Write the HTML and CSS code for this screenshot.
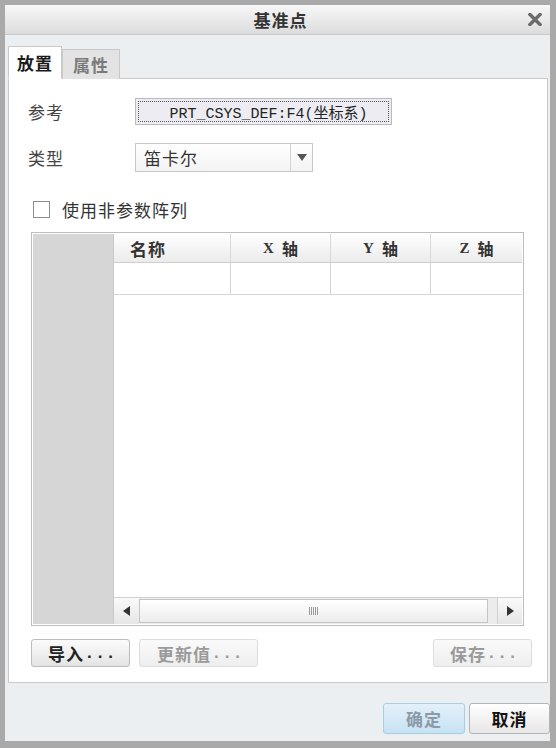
FILE: index.html
```html
<!DOCTYPE html>
<html lang="zh">
<head>
<meta charset="utf-8">
<link rel="stylesheet" href="styles.css">
</head>
<body>
<div class="window">
  <div class="titlebar">
    <span class="title">基准点</span>
    <span class="close"><svg width="14" height="13" viewBox="0 0 14 13"><path d="M2 1.5 L12 11.5 M12 1.5 L2 11.5" stroke="#6b6b6b" stroke-width="3.4" stroke-linecap="square"/></svg></span>
  </div>
  <div class="tabs">
    <div class="tab active">放置</div>
    <div class="tab">属性</div>
  </div>
  <div class="panel">
    <div class="form-row first">
      <span class="label">参考</span>
      <div class="refbtn"><span class="refinner">PRT_CSYS_DEF:F4(坐标系)</span></div>
    </div>
    <div class="form-row second">
      <span class="label">类型</span>
      <div class="select">
        <span class="select-text">笛卡尔</span>
        <span class="select-arrow"><svg width="10" height="7" viewBox="0 0 10 7"><path d="M0 0 L10 0 L5 7 Z" fill="#555"/></svg></span>
      </div>
    </div>
    <label class="check-row">
      <span class="checkbox"></span>
      <span class="check-text">使用非参数阵列</span>
    </label>
    <div class="table">
      <div class="rowhead"></div>
      <div class="grid">
        <div class="thead">
          <div class="th name">名称</div>
          <div class="th"><span class="ax">X</span> 轴</div>
          <div class="th"><span class="ax">Y</span> 轴</div>
          <div class="th last"><span class="ax">Z</span> 轴</div>
        </div>
        <div class="trow">
          <div class="td"></div>
          <div class="td"></div>
          <div class="td"></div>
          <div class="td last"></div>
        </div>
        <div class="filler"></div>
        <div class="hscroll">
          <div class="sbtn"><svg width="7" height="10" viewBox="0 0 7 10"><path d="M7 0 L7 10 L0 5 Z" fill="#333"/></svg></div>
          <div class="thumb"><span class="grip"></span></div>
          <div class="sgap"></div>
          <div class="sbtn right"><svg width="7" height="10" viewBox="0 0 7 10"><path d="M0 0 L0 10 L7 5 Z" fill="#333"/></svg></div>
        </div>
      </div>
    </div>
    <div class="btn-row">
      <div class="btn bold">导入<span class="dots">...</span></div>
      <div class="btn disabled wide">更新值<span class="dots">...</span></div>
      <div class="spacer"></div>
      <div class="btn disabled save">保存<span class="dots">...</span></div>
    </div>
  </div>
  <div class="footer">
    <div class="fbtn ok">确定</div>
    <div class="fbtn cancel">取消</div>
  </div>
</div>
</body>
</html>
```

FILE: styles.css
```css
* { box-sizing: border-box; }
html, body { margin: 0; padding: 0; }
body {
  width: 556px;
  height: 748px;
  font-family: "Noto Sans CJK SC", "Liberation Sans", sans-serif;
  background: #ffffff;
}
.window {
  width: 556px;
  height: 748px;
  border-style: solid;
  border-color: #a9a9a9;
  border-width: 5px 6px 7px 5px;
  background: #eceff1;
  display: flex;
  flex-direction: column;
}
.titlebar {
  height: 30px;
  flex: none;
  position: relative;
  background: linear-gradient(#f7f7f7, #dcdcdc);
  border-bottom: 1px solid #c9c9c9;
  display: flex;
  align-items: center;
  justify-content: center;
}
.title {
  font-size: 17px;
  font-weight: 700;
  color: #333;
  letter-spacing: 1px;
  margin-left: 6px;
}
.close {
  position: absolute;
  right: 8px;
  top: 8px;
  display: flex;
}
.tabs {
  height: 44px;
  flex: none;
  display: flex;
  align-items: flex-end;
  padding-left: 3px;
  margin-bottom: -1px;
  position: relative;
  z-index: 1;
}
.tab {
  height: 30px;
  width: 58px;
  background: #e3e3e3;
  border: 1px solid #c9c9c9;
  border-bottom: none;
  font-size: 17px;
  font-weight: 700;
  color: #7a7a7a;
  display: flex;
  align-items: center;
  justify-content: center;
  letter-spacing: 1px;
}
.tab.active {
  width: 54px;
  height: 33px;
  background: #ffffff;
  color: #1a1a1a;
  border-bottom: 1px solid #fff;
}
.panel {
  flex: 1;
  margin: 0 2px 0 3px;
  background: #ffffff;
  border: 1px solid #c9c9c9;
  display: flex;
  flex-direction: column;
  padding: 0 23px 0 22px;
}
.form-row {
  display: flex;
  align-items: center;
  margin-left: -3px;
}
.form-row.first { margin-top: 19px; height: 27px; }
.form-row.second { margin-top: 18px; height: 29px; }
.label {
  width: 107px;
  font-size: 17px;
  color: #444;
  letter-spacing: 1px;
}
.refbtn {
  width: 257px;
  height: 27px;
  border: 1px solid #b9b9c2;
  background: #ececf2;
  padding: 2px;
}
.refinner {
  display: flex;
  align-items: center;
  justify-content: center;
  height: 100%;
  border: 1px dotted #555;
  font-family: "Liberation Mono", "Noto Sans CJK SC", monospace;
  font-size: 15px;
  color: #222;
  padding-left: 10px;
}
.select {
  width: 178px;
  height: 29px;
  border: 1px solid #c6c6c6;
  background: linear-gradient(#ffffff, #f3f3f3);
  display: flex;
  align-items: center;
}
.select-text {
  flex: 1;
  font-size: 17px;
  color: #333;
  padding-left: 8px;
  letter-spacing: 1px;
}
.select-arrow {
  width: 22px;
  height: 100%;
  border-left: 1px solid #d2d2d2;
  display: flex;
  align-items: center;
  justify-content: center;
}
.check-row {
  display: flex;
  align-items: center;
  margin-top: 29px;
  height: 17px;
}
.checkbox {
  width: 17px;
  height: 17px;
  border: 1px solid #8c8c8c;
  background: #fff;
  margin-left: 2px;
}
.check-text {
  margin-left: 12px;
  font-size: 17px;
  color: #333;
  letter-spacing: 1px;
}
.table {
  margin-top: 14px;
  height: 394px;
  border: 1px solid #bdbdbd;
  padding: 1px;
  display: flex;
}
.rowhead {
  width: 81px;
  background: #d6d6d6;
  border-right: 1px solid #c9c9c9;
}
.grid {
  flex: 1;
  display: flex;
  flex-direction: column;
}
.thead, .trow {
  display: grid;
  grid-template-columns: 117px 100px 100px 1fr;
}
.thead {
  height: 29px;
  background: linear-gradient(#ffffff, #ebebeb);
  border-bottom: 1px solid #cfcfcf;
}
.th {
  display: flex;
  align-items: center;
  justify-content: center;
  font-size: 16px;
  font-weight: 700;
  color: #333;
  border-right: 1px solid #d8d8d8;
}
.th.name {
  justify-content: flex-start;
  padding-left: 16px;
  font-size: 17px;
  letter-spacing: 1px;
}
.th.last, .td.last { border-right: none; }
.ax {
  font-family: "Liberation Serif", serif;
  font-weight: 700;
  margin-right: 8px;
  font-size: 15px;
}
.trow {
  height: 32px;
  border-bottom: 1px solid #d6d6d6;
}
.td { border-right: 1px solid #d6d6d6; }
.filler { flex: 1; }
.hscroll {
  height: 27px;
  display: flex;
  background: #ececec;
  border-top: 1px solid #d0d0d0;
}
.sbtn {
  width: 25px;
  display: flex;
  align-items: center;
  justify-content: center;
  background: linear-gradient(#fafafa, #e6e6e6);
}
.sbtn.right { border-left: 1px solid #cfcfcf; }
.thumb {
  flex: 1;
  margin: 1px 0;
  border: 1px solid #c4c4c4;
  background: linear-gradient(#ffffff, #ececec);
  display: flex;
  align-items: center;
  justify-content: center;
}
.grip {
  width: 9px;
  height: 8px;
  background: repeating-linear-gradient(90deg, #9a9a9a 0 1px, transparent 1px 2px);
}
.sgap { width: 9px; }
.btn-row {
  display: flex;
  margin-top: 13px;
  height: 28px;
  margin-right: -8px;
}
.btn {
  height: 28px;
  width: 99px;
  border: 1px solid #bcbcbc;
  border-radius: 3px;
  background: linear-gradient(#fbfbfb, #e4e4e4);
  display: flex;
  align-items: center;
  justify-content: center;
  font-size: 17px;
  font-weight: 700;
  color: #222;
  letter-spacing: 1px;
}
.dots {
  letter-spacing: 6px;
  margin-left: 3px;
  margin-right: -6px;
  font-family: "Liberation Sans", sans-serif;
}
.btn.disabled {
  color: #9a9a9a;
  border-color: #dddddd;
  background: linear-gradient(#fafafa, #eeeeee);
}
.btn.wide { width: 119px; margin-left: 9px; }
.btn.save { width: 99px; }
.spacer { flex: 1; }
.footer {
  height: 58px;
  flex: none;
  display: flex;
  justify-content: flex-end;
  align-items: flex-start;
  padding: 20px 0 0 0;
  gap: 4px;
  background: #eceff1;
}
.fbtn {
  width: 82px;
  height: 31px;
  border-radius: 3px;
  display: flex;
  align-items: center;
  justify-content: center;
  font-size: 17px;
  font-weight: 700;
  letter-spacing: 1px;
}
.fbtn.ok {
  background: linear-gradient(#e3f1fa, #c6e2f3);
  border: 1px solid #a9cde4;
  color: #8b9aa6;
}
.fbtn.cancel {
  width: 81px;
  background: linear-gradient(#ffffff, #e6e6e6);
  border: 1px solid #b5b5b5;
  color: #111;
}
```
